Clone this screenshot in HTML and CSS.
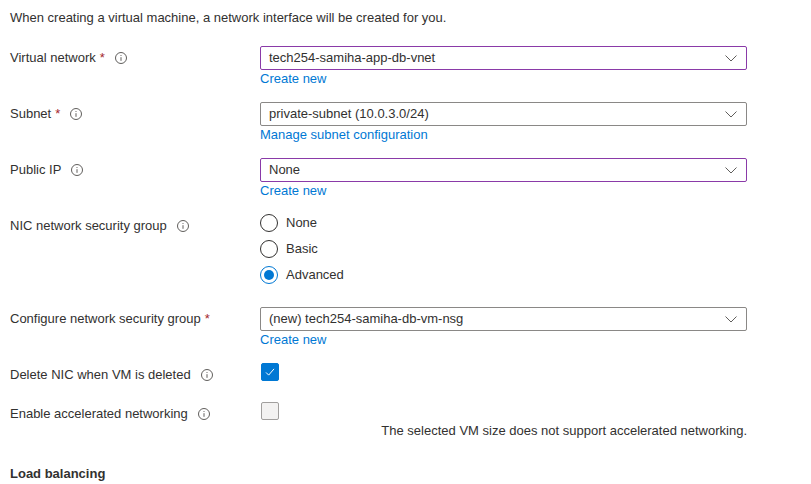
FILE: index.html
```html
<!DOCTYPE html>
<html>
<head>
<meta charset="utf-8">
<link rel="stylesheet" href="styles.css">
</head>
<body>
<p class="intro">When creating a virtual machine, a network interface will be created for you.</p>

<div class="row first">
  <div class="label">Virtual network<span class="req">*</span><svg class="info" viewBox="0 0 12 12"><circle cx="6" cy="6" r="5.5"/><line x1="6" y1="5.2" x2="6" y2="8.8"/><circle class="dot" cx="6" cy="3.5" r="0.6"/></svg></div>
  <div class="control">
    <div class="select active"><span>tech254-samiha-app-db-vnet</span><svg class="chev" viewBox="0 0 12 7"><polyline points="0.5,0.5 6,6 11.5,0.5"/></svg></div>
    <a class="link">Create new</a>
  </div>
</div>

<div class="row">
  <div class="label">Subnet<span class="req">*</span><svg class="info" viewBox="0 0 12 12"><circle cx="6" cy="6" r="5.5"/><line x1="6" y1="5.2" x2="6" y2="8.8"/><circle class="dot" cx="6" cy="3.5" r="0.6"/></svg></div>
  <div class="control">
    <div class="select"><span>private-subnet (10.0.3.0/24)</span><svg class="chev" viewBox="0 0 12 7"><polyline points="0.5,0.5 6,6 11.5,0.5"/></svg></div>
    <a class="link">Manage subnet configuration</a>
  </div>
</div>

<div class="row">
  <div class="label">Public IP<svg class="info" viewBox="0 0 12 12"><circle cx="6" cy="6" r="5.5"/><line x1="6" y1="5.2" x2="6" y2="8.8"/><circle class="dot" cx="6" cy="3.5" r="0.6"/></svg></div>
  <div class="control">
    <div class="select active"><span>None</span><svg class="chev" viewBox="0 0 12 7"><polyline points="0.5,0.5 6,6 11.5,0.5"/></svg></div>
    <a class="link">Create new</a>
  </div>
</div>

<div class="row">
  <div class="label pad">NIC network security group<svg class="info" viewBox="0 0 12 12"><circle cx="6" cy="6" r="5.5"/><line x1="6" y1="5.2" x2="6" y2="8.8"/><circle class="dot" cx="6" cy="3.5" r="0.6"/></svg></div>
  <div class="control radios">
    <div class="radio"><span class="circle"></span>None</div>
    <div class="radio"><span class="circle"></span>Basic</div>
    <div class="radio"><span class="circle on"></span>Advanced</div>
  </div>
</div>

<div class="row nsg">
  <div class="label">Configure network security group<span class="req">*</span></div>
  <div class="control">
    <div class="select"><span>(new) tech254-samiha-db-vm-nsg</span><svg class="chev" viewBox="0 0 12 7"><polyline points="0.5,0.5 6,6 11.5,0.5"/></svg></div>
    <a class="link">Create new</a>
  </div>
</div>

<div class="row">
  <div class="label pad">Delete NIC when VM is deleted<svg class="info" viewBox="0 0 12 12"><circle cx="6" cy="6" r="5.5"/><line x1="6" y1="5.2" x2="6" y2="8.8"/><circle class="dot" cx="6" cy="3.5" r="0.6"/></svg></div>
  <div class="control">
    <div class="check on"><svg viewBox="0 0 18 18"><polyline points="4.5,9.5 7.5,12.5 13.5,5.5"/></svg></div>
  </div>
</div>

<div class="row accel">
  <div class="label pad">Enable accelerated networking<svg class="info" viewBox="0 0 12 12"><circle cx="6" cy="6" r="5.5"/><line x1="6" y1="5.2" x2="6" y2="8.8"/><circle class="dot" cx="6" cy="3.5" r="0.6"/></svg></div>
  <div class="control">
    <div class="check off"></div>
    <p class="note">The selected VM size does not support accelerated networking.</p>
  </div>
</div>

<h3 class="section">Load balancing</h3>
</body>
</html>
```

FILE: styles.css
```css
html, body {
  margin: 0;
  padding: 0;
  background: #ffffff;
}
body {
  padding-left: 10px;
  font-family: "Liberation Sans", Arial, sans-serif;
  font-size: 13px;
  color: #323130;
  line-height: 18px;
}
.intro {
  margin: 9px 0 0 0;
}
.row {
  display: flex;
  margin-top: 14px;
}
.row.first { margin-top: 19px; }
.row.nsg { margin-top: 23px; }
.row.accel { margin-top: 18px; }
.label {
  width: 250px;
  flex: none;
  line-height: 24px;
  display: flex;
  align-items: flex-start;
}
.label.pad {
  padding-top: 3px;
  line-height: 18px;
}
.req {
  color: #a4262c;
  margin-left: 4px;
}
.info {
  width: 12px;
  height: 12px;
  margin-left: 10px;
  margin-top: 6px;
  fill: none;
  stroke: #605e5c;
  stroke-width: 1;
  flex: none;
}
.label.pad .info { margin-top: 3px; }
.info .dot { fill: #605e5c; stroke: none; }
.control {
  width: 487px;
  display: flex;
  flex-direction: column;
  align-items: flex-start;
}
.select {
  box-sizing: border-box;
  width: 487px;
  height: 24px;
  border: 1px solid #8a8886;
  border-radius: 2px;
  display: flex;
  align-items: center;
  justify-content: space-between;
  padding: 0 9px 0 8px;
  color: #323130;
}
.select.active { border-color: #8a3aa8; }
.chev {
  width: 12px;
  height: 7px;
  fill: none;
  stroke: #605e5c;
  stroke-width: 1;
}
.link {
  color: #0078d4;
  line-height: 18px;
  cursor: pointer;
}
.radios { gap: 8px; }
.radio {
  display: flex;
  align-items: center;
  height: 18px;
  gap: 8px;
}
.circle {
  box-sizing: border-box;
  width: 18px;
  height: 18px;
  border: 1px solid #323130;
  border-radius: 50%;
  display: flex;
  align-items: center;
  justify-content: center;
}
.circle.on { border-color: #0078d4; }
.circle.on::after {
  content: "";
  width: 10px;
  height: 10px;
  border-radius: 50%;
  background: #0078d4;
}
.check {
  box-sizing: border-box;
  width: 18px;
  height: 18px;
  border-radius: 2px;
  margin-left: 1px;
}
.check.on {
  background: #0078d4;
  border: 1px solid #0078d4;
}
.check.on svg {
  display: block;
  width: 16px;
  height: 16px;
  fill: none;
  stroke: #ffffff;
  stroke-width: 1.1;
}
.check.off {
  background: #f3f2f1;
  border: 1px solid #a19f9d;
}
.note {
  margin: 2px 0 0 0;
  align-self: flex-end;
  text-align: right;
}
.section {
  margin: 25px 0 0 0;
  font-size: 13px;
  font-weight: bold;
  line-height: 18px;
}
```
